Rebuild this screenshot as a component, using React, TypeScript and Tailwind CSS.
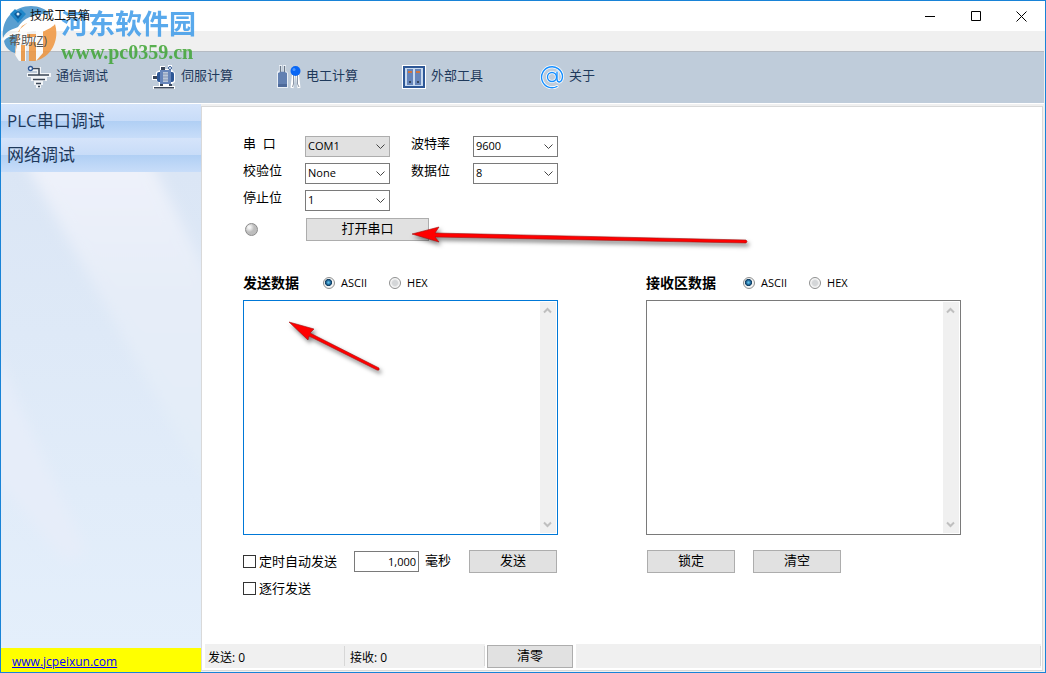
import { useState } from 'react'


const font = "font-['Open_Sans','Noto_Sans_CJK_SC',sans-serif]"
const btn = "border border-[#adadad] bg-[#e1e1e1] pb-[2px] text-center text-[13px] leading-[19px]"


const GroundIcon = () => (
    <svg width="24" height="24" viewBox="0 0 24 24" fill="none">
        <path d="M4 4H12V10M2 10H22M6 14H18M9 18H14M11 21H12" stroke="#fff" strokeWidth="4" strokeLinecap="square" opacity=".8" />
        <circle cx="3.500" cy="3.500" r="2" stroke="#2d5796" strokeWidth="1.400" />
        <path d="M6 3.500H12V10" stroke="#3a4554" strokeWidth="1.500" />
        <path d="M1 10H22M6 14.500H18M9 18.500H14M11 21.500H13" stroke="#3a4554" strokeWidth="1.600" />
    </svg>
)

const MotorIcon = () => (
    <svg width="24" height="24" viewBox="0 0 24 24">
        <path d="M0 10H4V7L8 5V1H13V4H16V0H20V5L23 8V17L20 19V21H23V24H1V21H7V18L4 15H0Z" fill="#fff" />
        <path d="M1 11H5V14H1Z" fill="#39465a" />
        <rect x="5" y="7" width="17" height="10" rx="2" fill="#2d5796" />
        <rect x="8" y="5" width="11" height="14" fill="#6685ba" />
        <path d="M11 7V17H16V7Z" fill="#b9c6da" />
        <path d="M11 9H16M11 12H16M11 15H16" stroke="#8495b1" />
        <path d="M9 2H13V5H9Z" fill="#39465a" />
        <circle cx="18" cy="3" r="1.500" fill="none" stroke="#2d5796" />
        <path d="M8 19H11V21H8ZM17 19H20V21H17ZM2 22H22V23.500H2Z" fill="#39465a" />
    </svg>
)

const CapacitorIcon = () => (
    <svg width="24" height="24" viewBox="0 0 24 24">
        <path d="M0 7L2 5V0H5V6H6V0H9V6L11 8V23H0Z" fill="#e9eff6" />
        <path d="M3.500 1V8M7.500 1V8" stroke="#697789" strokeWidth="1.300" />
        <path d="M1 8Q5.500 5 10 8V22H1Z" fill="#6280b1" />
        <path d="M1 19H10V22H1Z" fill="#4e6a9a" />
        <path d="M16.500 10L15 23M20.500 10L22 23" stroke="#fff" strokeWidth="3" />
        <path d="M16.500 10V19L15.500 22M20.500 10V19L22 22" stroke="#8b96a6" fill="none" />
        <circle cx="18.500" cy="6" r="5" fill="#0866f5" />
        <circle cx="17" cy="4.500" r="1.500" fill="#4d97ff" />
    </svg>
)

const CabinetIcon = () => (
    <svg width="24" height="24" viewBox="0 0 24 24">
        <rect width="24" height="24" fill="#fff" />
        <rect x="1" y="1" width="22" height="22" fill="#2d5796" />
        <rect x="3" y="3" width="18" height="18" fill="#c7d9ef" />
        <path d="M5 4H11V20H5ZM13 4H19V20H13Z" fill="#6685ba" />
        <path d="M6 6H10V8H6ZM14 6H18V8H14Z" fill="#ce7540" />
        <path d="M7 16H9V18H7ZM15 16H17V18H15Z" fill="#35465e" />
    </svg>
)

const AtIcon = () => (
    <svg width="24" height="24" viewBox="0 0 24 24" fill="none" strokeLinecap="round">
        <g stroke="#fff" strokeWidth="3">
            <circle cx="12" cy="12" r="4.500" />
            <path d="M17 7V14Q17 17 19.500 17Q22.500 16 22.500 11A10.500 10.500 0 1 0 17 21.500" />
        </g>
        <g stroke="#168fff" strokeWidth="1.400">
            <circle cx="12" cy="12" r="4.500" />
            <path d="M17 7V14Q17 17 19.500 17Q22.500 16 22.500 11A10.500 10.500 0 1 0 17 21.500" />
        </g>
    </svg>
)

const tools = [
    { name: "通信调试", icon: <GroundIcon /> },
    { name: "伺服计算", icon: <MotorIcon /> },
    { name: "电工计算", icon: <CapacitorIcon /> },
    { name: "外部工具", icon: <CabinetIcon /> },
    { name: "关于", icon: <AtIcon /> },
]


const Watermark = () => (
    <div className="pointer-events-none absolute top-[3px] left-0 flex items-start gap-[3px] opacity-85">
        <svg width="57" height="60" viewBox="0 0 57 60">
            <path d="M2 34C0 14 14 2 30 2C38 2 45 5 49 10C34 9 23 14 17 23C13 25 5 26 2 34Z" fill="#3e8fc9" />
            <path d="M3 37C7 32 12 30 16 29L14 49C8 47 4 43 3 37Z" fill="#3e8fc9" />
            <path d="M21 22L26 19V30H35V16L41 14V28C48 25 53 22 54 20C59 36 50 54 34 57H28V38H23V57C19 56 16 54 14 51L17 28Z" fill="#f0953d" />
            <path d="M14 51L19 25L26 19V33H35V16L42 14V49L35 57V38H25V57H18Z" fill="#fff" />
            <path d="M20 57V41H24V57ZM29 57V39H33V57Z" fill="#f0953d" />
            <path d="M1 36C14 25 36 30 55 17" stroke="#fff" strokeWidth="2" fill="none" />
        </svg>
        <div className="flex flex-col">
            <span className="font-['Noto_Sans_CJK_SC',sans-serif] text-[27px] leading-[38px] font-bold text-[#3d9be9]">河东软件园</span>
            <span className="font-['Liberation_Serif',serif] text-[20px] leading-[20px] font-bold text-[#3fa535]">www.pc0359.cn</span>
        </div>
    </div>
)


const TitleBar = () => (
    <header className="flex h-[30px] items-center bg-white pl-2">
        <svg className="relative z-10" width="18" height="16" viewBox="0 0 18 16">
            <path d="M1 6L6 1L9 4L12 1L17 6L9 15Z" fill="#2087c9" />
            <path d="M5 6L9 3L13 6L9 11Z" fill="#0d5a99" />
            <circle cx="9" cy="6" r="1.500" fill="#d8eefb" />
        </svg>
        <h1 className="relative z-10 flex-1 pl-[3px] text-[12px] text-[#111]">技成工具箱</h1>
        <button aria-label="最小化" className="flex h-full w-[46px] items-center justify-center">
            <svg width="10" height="10" stroke="#000"><path d="M0 5.500H10" /></svg>
        </button>
        <button aria-label="最大化" className="flex h-full w-[45px] items-center justify-center">
            <svg width="10" height="10" stroke="#000" fill="none"><path d="M.5.5H9.500V9.500H.5Z" /></svg>
        </button>
        <button aria-label="关闭" className="flex h-full w-[47px] items-center justify-center">
            <svg width="11" height="11" stroke="#000"><path d="M.5.5L10.500 10.500M10.500.5L.5 10.500" /></svg>
        </button>
    </header>
)


const Sidebar = () => (
    <aside className="flex w-[200px] shrink-0 flex-col text-[#1e395b]">
        {["PLC串口调试", "网络调试"].map(name => (
            <button key={name} className="h-[34px] bg-[linear-gradient(#d5e4fa,#c8dcf8_50%,#b0cff4_50%,#c8ddf9)] pl-[6px] text-left text-[17px]">{name}</button>
        ))}
        <div className="relative flex-1 overflow-hidden bg-linear-to-b from-[#dbe6f5] to-[#e4effb]">
            <svg className="absolute inset-0 h-full w-full" viewBox="0 0 200 476" preserveAspectRatio="none">
                <defs>
                    <filter id="soft"><feGaussianBlur stdDeviation="7" /></filter>
                    <linearGradient id="beam" x1="0" y1="0" x2="0" y2="1">
                        <stop offset="0" stopColor="#eff2fa" />
                        <stop offset=".4" stopColor="#e6edf8" />
                        <stop offset="1" stopColor="#e2edf8" />
                    </linearGradient>
                </defs>
                <path d="M18 -20H145L215 120V330Z" fill="url(#beam)" filter="url(#soft)" />
                <path d="M-10 170L85 380L65 390L-10 300Z" fill="#e6edf9" filter="url(#soft)" />
            </svg>
        </div>
        <div className="flex h-6 items-center bg-[#ffff00] pt-1 pl-[11px]">
            <a href="http://www.jcpeixun.com" className="text-[12px] leading-[16px] text-[#0000ff] underline">www.jcpeixun.com</a>
        </div>
    </aside>
)


const Field = ({ id, label, options, gray = false }: { id: string, label: string, options: string[], gray?: boolean }) => (
    <>
        <label htmlFor={id} className="pb-[6px] text-[13px] leading-[15px] whitespace-pre">{label}</label>
        <div className="relative w-[85px]">
            <select id={id} className={`block h-[21px] w-full appearance-none border pl-[2px] text-[11px] ${gray ? "border-[#adadad] bg-[#e1e1e1]" : "border-[#7a7a7a] bg-white"}`}>
                {options.map(o => <option key={o}>{o}</option>)}
            </select>
            <svg className="pointer-events-none absolute top-2 right-[5px]" width="9" height="6" fill="none" stroke="#444"><path d="M.5.5L4.500 4.500L8.500.5" /></svg>
        </div>
    </>
)


const Radio = ({ name, label, checked, onChange }: { name: string, label: string, checked: boolean, onChange: () => void }) => (
    <label className="flex items-center gap-[6px] text-[11px] leading-[16px]">
        <input
            type="radio"
            name={name}
            checked={checked}
            onChange={onChange}
            className="h-3 w-3 appearance-none rounded-full border border-[#8e8f8f] bg-[radial-gradient(circle,#d4d6d8_35%,#f6f6f6_60%)] checked:bg-[radial-gradient(circle_at_45%_45%,#5fc4ee_5%,#12497a_35%,#12405f_42%,#f4f4f4_50%)]"
        />
        {label}
    </label>
)


const DataBox = ({ id, title, active = false }: { id: string, title: string, active?: boolean }) => {
    const [mode, setMode] = useState("ASCII")

    return (
        <div className="w-[315px]">
            <div className="flex h-[18px] items-center">
                <label htmlFor={id} className={`text-[14px] leading-[18px] font-bold ${active ? "w-20" : "w-[97px]"}`}>{title}</label>
                <div className="flex gap-[22px]">
                    <Radio name={id + "-mode"} label="ASCII" checked={mode === "ASCII"} onChange={() => setMode("ASCII")} />
                    <Radio name={id + "-mode"} label="HEX" checked={mode === "HEX"} onChange={() => setMode("HEX")} />
                </div>
            </div>
            <div className={`mt-2 flex h-[235px] border p-px ${active ? "border-[#0078d7]" : "border-[#7a7a7a]"}`}>
                <textarea id={id} className="flex-1 resize-none p-1 text-[12px] outline-none" />
                <div className="flex w-4 flex-col items-center justify-between bg-[#f0f0f0] py-[5px] pr-px">
                    <svg width="9" height="7" fill="none" stroke="#bfbfbf" strokeWidth="2"><path d="M1 5.500L4.500 2L8 5.500" /></svg>
                    <svg width="9" height="7" fill="none" stroke="#bfbfbf" strokeWidth="2"><path d="M1 1.500L4.500 5L8 1.500" /></svg>
                </div>
            </div>
        </div>
    )
}


const Check = ({ label }: { label: string }) => (
    <label className="flex items-center gap-[3px] text-[13px] leading-[17px]">
        <input type="checkbox" className="h-[13px] w-[13px] appearance-none border border-[#333] bg-white checked:bg-[#333]" />
        {label}
    </label>
)


// red pointers drawn over the form
const Arrows = () => (
    <svg className="pointer-events-none absolute top-[106px] left-[78px] drop-shadow-[2px_3px_2px_rgba(0,0,0,0.5)]" width="480" height="170" viewBox="0 0 480 170">
        <g fill="#f00" stroke="#a01010" strokeWidth=".6">
            <path d="M131 21L158 14L154 20L465 27Q467 28.500 465 30L154 24L158 29Z" />
            <path d="M8 109L33 116L29 120L98 155Q99 158 96 157L28 123L27 127Z" />
        </g>
    </svg>
)


const SerialPanel = () => (
    <main className="relative ml-px flex flex-1 flex-col text-black">
        <div className="flex-1 pt-[29px] pl-[40px]">
            <div className="grid grid-cols-[62px_106px_62px_85px] items-center gap-y-[6px]">
                <Field id="port" label="串  口" options={["COM1", "COM2"]} gray />
                <Field id="baud" label="波特率" options={["9600", "19200"]} />
                <Field id="parity" label="校验位" options={["None", "Odd", "Even"]} />
                <Field id="bits" label="数据位" options={["8", "7"]} />
                <Field id="stop" label="停止位" options={["1", "2"]} />
            </div>
            <div className="mt-[7px] flex items-center">
                <div className="ml-[2px] h-[13px] w-[13px] rounded-full border border-[#8b8b8b] bg-[radial-gradient(circle_at_30%_30%,#f4f4f4_10%,#bdbdbd_45%)]" />
                <button className={`${btn} ml-[48px] h-[23px] w-[123px]`}>打开串口</button>
            </div>
            <div className="mt-[33px] flex gap-[88px]">
                <DataBox id="send" title="发送数据" active />
                <DataBox id="receive" title="接收区数据" />
            </div>
            <div className="mt-[15px] flex gap-[90px]">
                <div className="w-[314px]">
                    <div className="flex items-center">
                        <Check label="定时自动发送" />
                        <input id="interval" defaultValue="1,000" className="ml-[17px] h-[21px] w-[65px] border border-[#7a7a7a] pr-[2px] text-right text-[11px]" />
                        <label htmlFor="interval" className="flex-1 pb-[2px] pl-[6px] text-[13px] leading-[17px]">毫秒</label>
                        <button className={`${btn} h-[23px] w-[88px]`}>发送</button>
                    </div>
                    <div className="mt-[7px]">
                        <Check label="逐行发送" />
                    </div>
                </div>
                <div className="flex items-start gap-[18px]">
                    <button className={`${btn} h-[23px] w-[88px]`}>锁定</button>
                    <button className={`${btn} h-[23px] w-[88px]`}>清空</button>
                </div>
            </div>
        </div>
        <footer className="mr-px mb-[2px] ml-[2px] flex h-6 bg-[#f0f0f0] text-[12px]">
            <div className="my-[2px] w-[140px] border-r border-[#d7d7d7] pt-[2px] pl-[3px] leading-[20px]">发送: 0</div>
            <div className="my-[2px] w-[140px] border-r border-[#d7d7d7] pt-[2px] pl-[5px] leading-[20px]">接收: 0</div>
            <div className="w-[91px] bg-white pt-px pl-[2px]">
                <button className={`${btn} h-[23px] w-[86px]`}>清零</button>
            </div>
            <div className="my-[2px] flex-1 border-r border-[#d7d7d7]" />
        </footer>
        <Arrows />
    </main>
)


const App = () => {
    return (
        <div className={`${font} relative flex min-h-screen flex-col border border-[#1883d7] bg-[#f0f0f0]`}>
            <TitleBar />
            <div className="flex h-5 items-center pl-2 text-[12px] text-[#555]">
                <button className="relative z-10">帮助(<u>Z</u>)</button>
            </div>
            <nav className="mr-px flex h-[53px] border-t border-b border-t-[#b5bbc3] border-b-white bg-[#bfccda] pb-[2px] pl-1">
                {tools.map(t => (
                    <button key={t.name} className="flex w-[125px] items-center justify-center gap-[5px] text-[13px] text-[#1e395b]">
                        {t.icon}
                        <span className="pb-px">{t.name}</span>
                    </button>
                ))}
            </nav>
            <div className="flex flex-1">
                <Sidebar />
                <div className="mt-[2px] mr-[2px] mb-px flex flex-1 border border-[#d9d9d9] bg-white">
                    <SerialPanel />
                </div>
            </div>
            <Watermark />
        </div>
    )
}


export default App
